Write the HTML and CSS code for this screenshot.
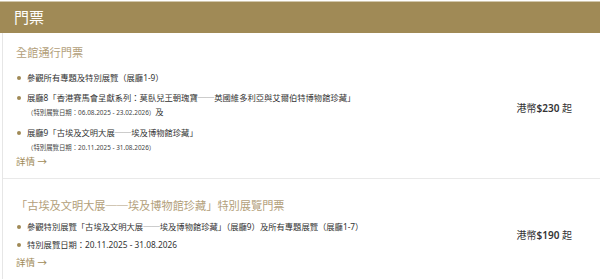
FILE: index.html
```html
<!DOCTYPE html>
<html lang="zh-Hant">
<head>
<meta charset="utf-8">
<title>門票</title>
<link rel="stylesheet" href="styles.css">
</head>
<body>
<section class="panel">
  <h1 class="panel-head">門票</h1>
  <div class="panel-body">
    <div class="card card-first">
      <div class="card-main">
        <h2 class="card-title">全館通行門票</h2>
        <ul class="items">
          <li class="item"><span class="item-text">參觀所有專題及特別展覽（展廳1-9）</span></li>
          <li class="item"><span class="item-text">展廳8「香港賽馬會呈獻系列：莫臥兒王朝瑰寶──英國維多利亞與艾爾伯特博物館珍藏」<br><span class="small">（特別展覽日期：06.08.2025 - 23.02.2026）</span>及</span></li>
          <li class="item"><span class="item-text">展廳9「古埃及文明大展──埃及博物館珍藏」<br><span class="small">（特別展覽日期：20.11.2025 - 31.08.2026）</span></span></li>
        </ul>
        <a class="more" href="#">詳情 →</a>
      </div>
      <div class="price">港幣<b>$230</b> 起</div>
    </div>
    <div class="card card-second">
      <div class="card-main">
        <h2 class="card-title">「古埃及文明大展──埃及博物館珍藏」特別展覽門票</h2>
        <ul class="items">
          <li class="item"><span class="item-text">參觀特別展覽「古埃及文明大展──埃及博物館珍藏」（展廳9）及所有專題展覽（展廳1-7）</span></li>
          <li class="item"><span class="item-text">特別展覽日期：20.11.2025 - 31.08.2026</span></li>
        </ul>
        <a class="more" href="#">詳情 →</a>
      </div>
      <div class="price">港幣<b>$190</b> 起</div>
    </div>
  </div>
</section>
</body>
</html>
```
FILE: styles.css
```css
html, body {
  margin: 0;
  padding: 0;
  background: #fff;
}
body {
  font-family: "Noto Sans", "Noto Sans CJK TC", sans-serif;
  color: #333;
  overflow: hidden;
}
.panel {
  padding-top: 1px;
}
.panel-head {
  margin: 0;
  height: 31px;
  line-height: 31px;
  padding-left: 14px;
  background: #a08a56;
  border-top: 1px solid #d2c7ab;
  color: #fff;
  font-size: 15px;
  font-weight: 400;
}
.panel-body {
  margin-left: 2px;
  border-left: 1px solid #e6e6e6;
}
.card {
  display: flex;
  align-items: center;
  justify-content: space-between;
  padding: 12px 28px 9px 13px;
}
.card-first {
  border-bottom: 1px solid #e9e9e9;
}
.card-second {
  padding-top: 19px;
}
.card-main {
  display: flex;
  flex-direction: column;
  align-items: flex-start;
}
.card-title {
  margin: 0;
  font-size: 11.2px;
  line-height: 16px;
  font-weight: 400;
  color: #b3a07a;
}
.items {
  list-style: none;
  margin: 10px 0 0;
  padding: 0;
  display: flex;
  flex-direction: column;
  gap: 6px;
}
.card-second .items {
  margin-top: 6px;
  gap: 4px;
  margin-bottom: 4px;
}
.item {
  display: flex;
  align-items: flex-start;
  font-size: 8.3px;
  line-height: 14px;
  color: #333;
}
.item::before {
  content: "";
  flex: none;
  width: 4px;
  height: 4px;
  border-radius: 50%;
  background: #a08a56;
  margin: 5px 6px 0 1px;
}
.small {
  font-size: 6.4px;
  color: #444;
}
.more {
  font-size: 9.5px;
  line-height: 14px;
  color: #a08a56;
  text-decoration: none;
}
.price {
  font-size: 10px;
  color: #333;
  white-space: nowrap;
}
.price b {
  font-weight: 600;
}
```
